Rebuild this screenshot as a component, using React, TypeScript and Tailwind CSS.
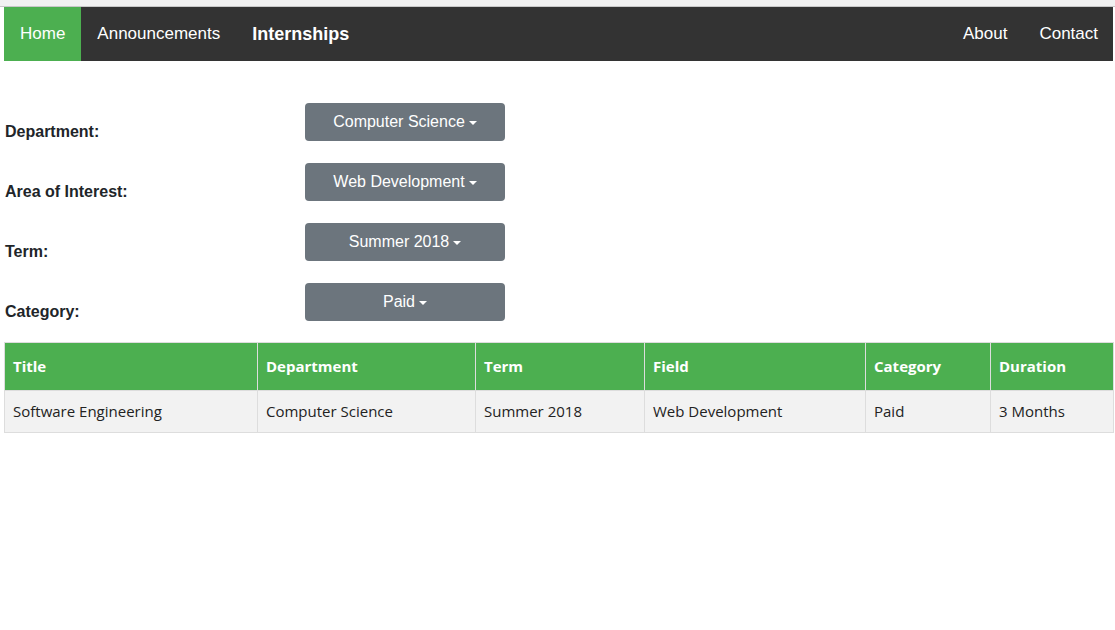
import React from 'react';

const filters = [
  { label: 'Department:', value: 'Computer Science' },
  { label: 'Area of Interest:', value: 'Web Development' },
  { label: 'Term:', value: 'Summer 2018' },
  { label: 'Category:', value: 'Paid' },
];

const columns = [
  { name: 'Title', width: 'w-[253px]' },
  { name: 'Department', width: 'w-[218px]' },
  { name: 'Term', width: 'w-[169px]' },
  { name: 'Field', width: 'w-[221px]' },
  { name: 'Category', width: 'w-[125px]' },
  { name: 'Duration', width: 'w-[123px]' },
];

const rows = [
  ['Software Engineering', 'Computer Science', 'Summer 2018', 'Web Development', 'Paid', '3 Months'],
];

const App: React.FC = () => {
  return (
    <div className="min-h-[630px] bg-white font-['Liberation_Sans',Arial,sans-serif]">
      {/* browser strip */}
      <div className="h-[7px] bg-[#f1f1f1] border-b border-[#c8c8c8]" />

      <nav className="ml-1 w-[1109px] h-[54px] bg-[#333333] flex items-stretch text-white text-[17px]">
        <a className="flex items-center px-4 bg-[#4CAF50]">Home</a>
        <a className="flex items-center px-4">Announcements</a>
        <a className="flex items-center px-4 font-bold text-[18px]">Internships</a>
        <div className="flex-1" />
        <a className="flex items-center pl-4 pr-[16px]">About</a>
        <a className="flex items-center pl-4 pr-[15px]">Contact</a>
      </nav>

      <div className="ml-1 mt-[42px] flex flex-col gap-[22px]">
        {filters.map((f) => (
          <div key={f.label} className="flex items-start h-[38px]">
            <label className="w-[301px] pl-px pt-[17px] leading-6 text-[16px] font-bold text-[#212529]">
              {f.label}
            </label>
            <button className="w-[200px] h-[38px] rounded bg-[#6c757d] text-white text-[16px] flex items-center justify-center">
              {f.value}
              <span className="ml-[4px] mt-[1px] inline-block w-0 h-0 border-t-[4px] border-t-white border-x-[4px] border-x-transparent" />
            </button>
          </div>
        ))}
      </div>

      <table className="ml-1 mt-[21px] w-[1109px] table-fixed border-collapse font-['Open_Sans',sans-serif] text-[15px]">
        <colgroup>
          {columns.map((c) => (
            <col key={c.name} className={c.width} />
          ))}
        </colgroup>
        <thead>
          <tr className="bg-[#4CAF50] text-white">
            {columns.map((c) => (
              <th key={c.name} className="h-[48px] px-2 text-left font-bold border border-[#dddddd]">
                {c.name}
              </th>
            ))}
          </tr>
        </thead>
        <tbody>
          {rows.map((r, i) => (
            <tr key={i} className="bg-[#f2f2f2] text-[#222222]">
              {r.map((cell, j) => (
                <td key={j} className="h-[42px] px-2 border border-[#dddddd]">
                  {cell}
                </td>
              ))}
            </tr>
          ))}
        </tbody>
      </table>
    </div>
  );
};

export default App;
